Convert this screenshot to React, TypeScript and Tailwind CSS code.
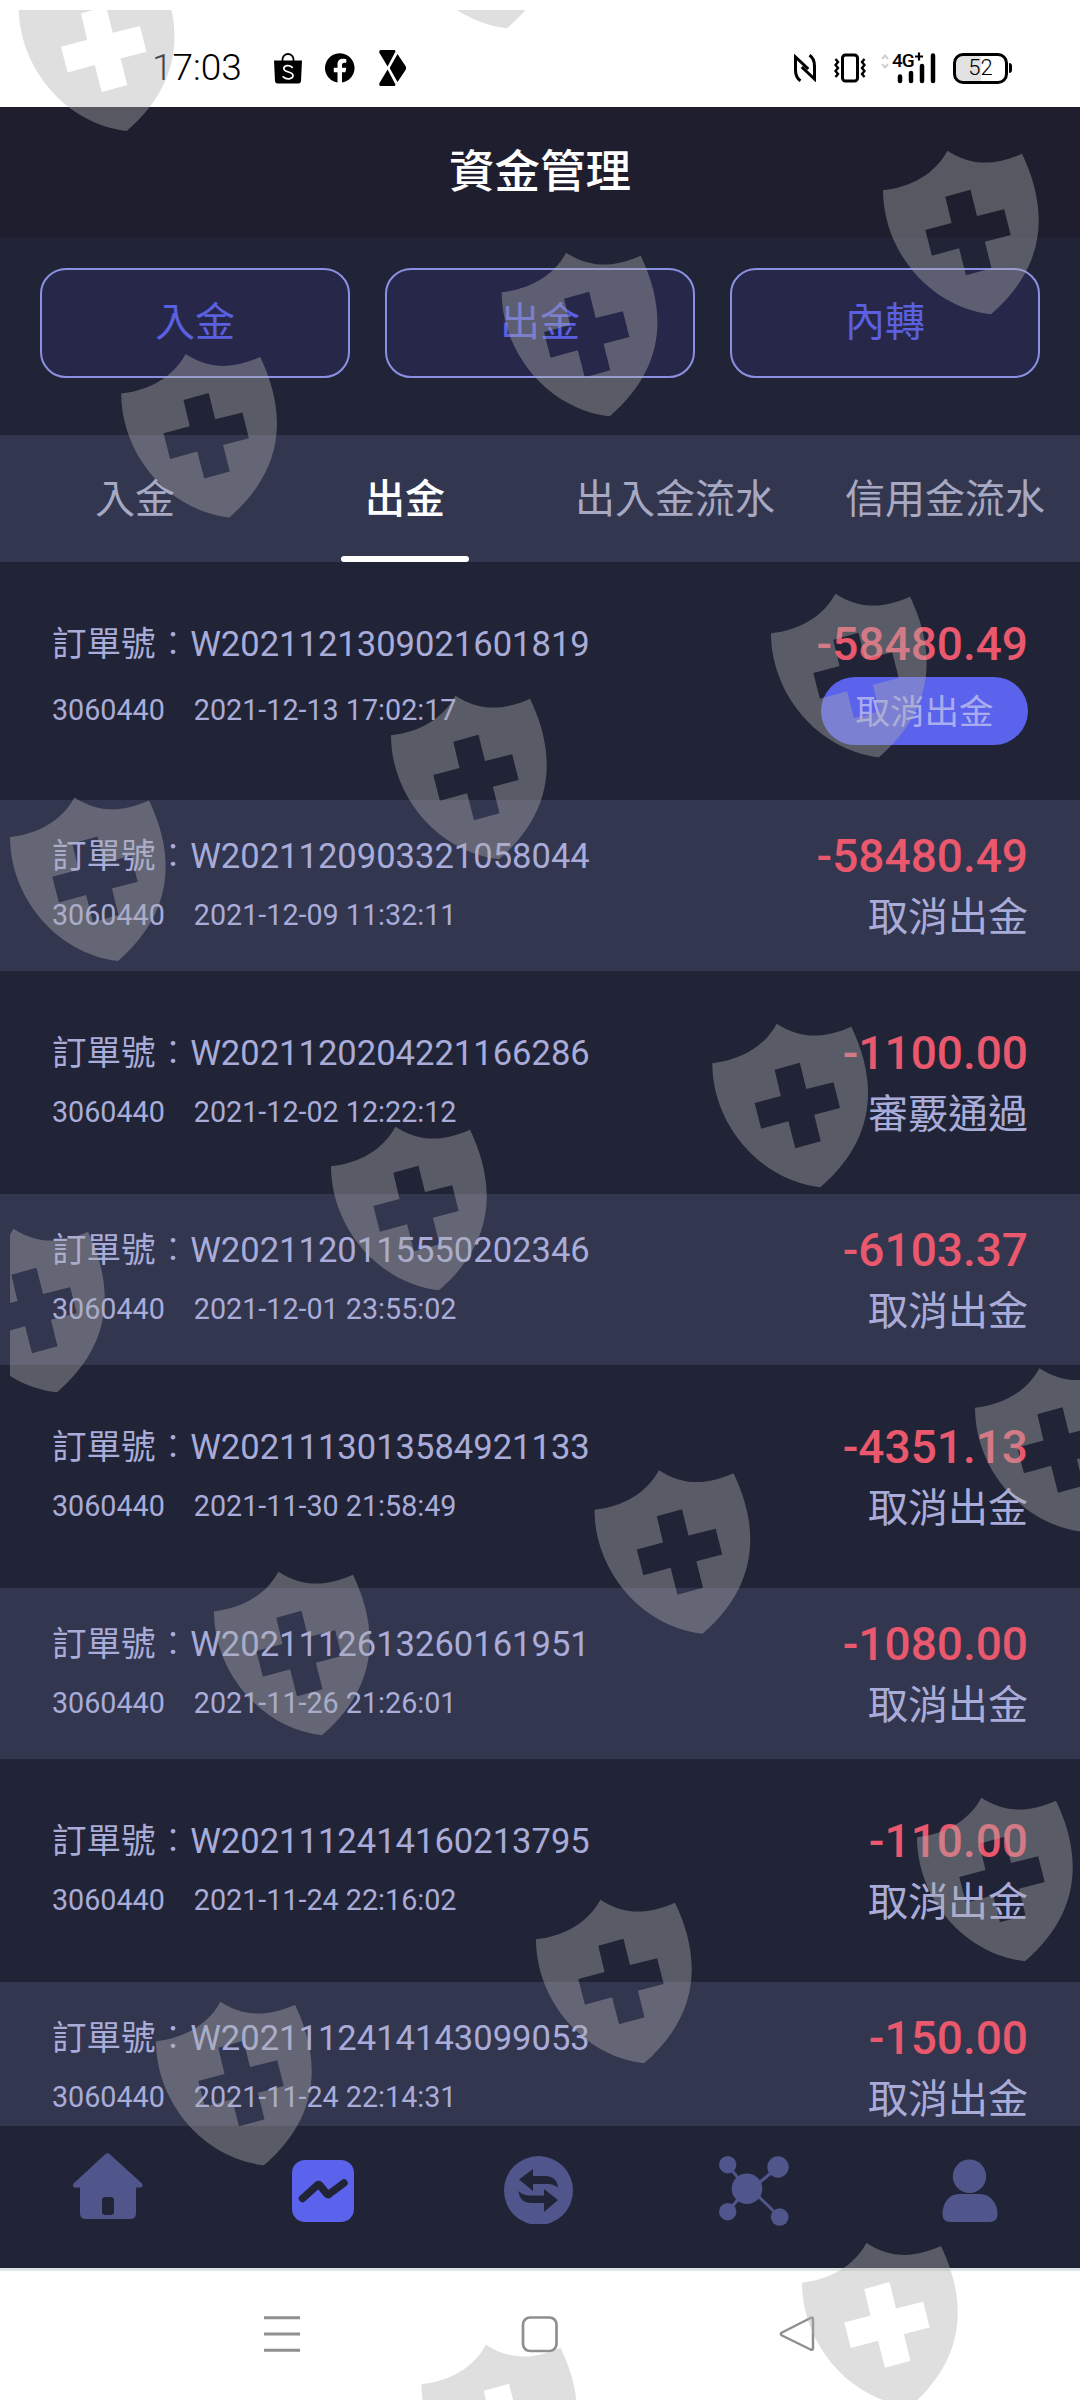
import clsx from 'clsx';

interface Order {
  orderNo: string;
  account: string;
  time: string;
  amount: string;
  status: string;
  cancellable?: boolean;
}

const actions = ['入金', '出金', '內轉'];
const tabs = ['入金', '出金', '出入金流水', '信用金流水'];
const activeTab = '出金';

const orders: Order[] = [
  { orderNo: 'W2021121309021601819', account: '3060440', time: '2021-12-13 17:02:17', amount: '-58480.49', status: '取消出金', cancellable: true },
  { orderNo: 'W2021120903321058044', account: '3060440', time: '2021-12-09 11:32:11', amount: '-58480.49', status: '取消出金' },
  { orderNo: 'W2021120204221166286', account: '3060440', time: '2021-12-02 12:22:12', amount: '-1100.00', status: '審覈通過' },
  { orderNo: 'W2021120115550202346', account: '3060440', time: '2021-12-01 23:55:02', amount: '-6103.37', status: '取消出金' },
  { orderNo: 'W2021113013584921133', account: '3060440', time: '2021-11-30 21:58:49', amount: '-4351.13', status: '取消出金' },
  { orderNo: 'W2021112613260161951', account: '3060440', time: '2021-11-26 21:26:01', amount: '-1080.00', status: '取消出金' },
  { orderNo: 'W2021112414160213795', account: '3060440', time: '2021-11-24 22:16:02', amount: '-110.00', status: '取消出金' },
  { orderNo: 'W2021112414143099053', account: '3060440', time: '2021-11-24 22:14:31', amount: '-150.00', status: '取消出金' },
];

// top-left corner of every shield in the watermark layer
const shields = [
  [18.7, -33.3],
  [399, -136],
  [883, 150],
  [501.7, 252],
  [121.2, 353.3],
  [771, 593],
  [391, 695],
  [10, 796.7],
  [712.3, 1023],
  [331, 1126],
  [-51, 1228],
  [975, 1367.5],
  [594.5, 1469.5],
  [214, 1571],
  [917, 1797],
  [536, 1899],
  [156, 2001],
  [802, 2242.4],
  [421.5, 2344],
];

const StatusBar = () => (
  <div className="h-[107px] shrink-0 bg-white text-black flex items-start justify-between pl-[152px] pr-[68px] pt-[50px]">
    <div className="flex h-9 items-center">
      <span className="w-[122px] text-[37px] leading-9 font-light font-['Roboto',sans-serif]">17:03</span>
      {/* shopping bag */}
      <svg width="28" height="32" viewBox="0 0 28 32" className="shrink-0">
        <path d="M8.5 10V7.500a5.500 5.500 0 0 1 11 0V10" fill="none" stroke="#000" strokeWidth="1.8" />
        <path d="M0 8.500h28l-1 20.500q-.2 2.500-2.700 2.500H3.700Q1.200 31.500 1 29z" />
        <path d="M18.200 15.300c-2.600-2.600-8.400-2.200-8.400 1.300 0 4.300 9.200 2.600 9.200 7 0 3.800-6.600 4.300-9.800 1.300" fill="none" stroke="#fff" strokeWidth="1.700" strokeLinecap="round" />
      </svg>
      <svg width="30" height="30" viewBox="0 0 30 30" className="ml-[23px] shrink-0">
        <path d="M12.500 29.600V19.200H8.800v-4.400h3.700v-3.300c0-3.800 2.100-5.800 5.600-5.800 1.600 0 3.200.3 3.200.3v3.700h-1.900c-1.800 0-2.400 1.100-2.400 2.300v2.800h4.200l-.7 4.400H17v10.400A14.800 14.800 0 1 0 12.500 29.600z" />
      </svg>
      <svg width="27" height="36" viewBox="0 0 27 36" className="ml-6 shrink-0">
        <path d="M2 0h13q2 0 1.200 2L8.600 16.500.5 3Q-.5 0 2 0zM8.600 19.500 16.200 34q.8 2-1.200 2H2q-2.500 0-1.500-3zM18.500 4l8 12q1.200 2 0 4l-8 12-7.300-13q-.7-1 0-2z" />
      </svg>
    </div>
    <div className="flex h-9 items-center">
      <svg width="22" height="28" viewBox="0 0 22 28" className="mr-px shrink-0" fill="none" stroke="#000" strokeWidth="3">
        <path d="M6.500 26.800Q1.500 23.500 1.500 16V3l12.800 12M15.500 1.200q5 3.300 5 10.800v13L7.700 13" />
      </svg>
      <svg width="32" height="30" viewBox="0 0 32 30" className="mr-px ml-[17px] shrink-0" fill="none" stroke="#000">
        <rect x="8.500" y="2" width="15" height="26" rx="3" strokeWidth="3" />
        <path d="m1.500 6 2.500 3-2.500 3 2.500 3-2.500 3 2.500 3-2.500 3M30.500 6 28 9l2.500 3-2.500 3 2.500 3-2.500 3 2.500 3" strokeWidth="2.400" />
      </svg>
      <div className="relative ml-[14px] w-[56px] h-8 shrink-0">
        <svg width="56" height="32" viewBox="0 0 56 32">
          <path d="m1 7 3-3.500L7 7M1 12l3 3.500L7 12" fill="none" stroke="#cfcfcf" strokeWidth="2" />
          <path d="M19 24.500v4.500M30 21v8M41 14v15M52 3.500V29" stroke="#000" strokeWidth="4.500" strokeLinecap="round" />
          <path d="M38 .5v8M34 4.500h8" stroke="#000" strokeWidth="2.200" />
        </svg>
        <span className="absolute left-[11px] top-[-1px] text-[19px] leading-5 font-medium tracking-[-1px] font-['Roboto',sans-serif]">4G</span>
      </div>
      <div className="ml-4 flex items-center shrink-0">
        <div className="flex h-[31px] w-[55px] items-center justify-center rounded-[10px] border-3 border-black bg-linear-to-r from-[#e2e2e2] from-50% to-white to-50%">
          <span className="text-[22px] leading-6 font-light font-['Roboto',sans-serif]">52</span>
        </div>
        <div className="ml-px h-2.5 w-[3px] rounded-r bg-black" />
      </div>
    </div>
  </div>
);

const OrderRow = ({ order, striped }: { order: Order; striped: boolean }) => (
  <div
    className={clsx(
      'flex shrink-0 justify-between px-[52px] text-[#a9acd9]',
      striped ? 'h-[171px] bg-[#33364f] pt-[25px]' : order.cancellable ? 'h-[238px] pt-[51px]' : 'h-[223px] pt-[51px]',
    )}
  >
    <div className={clsx('flex flex-col', order.cancellable && 'gap-[7px]')}>
      <p className="text-[34.560px] leading-[62px]">
        訂單號<span className="font-light">：</span>
        {order.orderNo}
      </p>
      <p className="flex gap-[29px] text-[28.700px] leading-[56px]">
        <span>{order.account}</span>
        <span>{order.time}</span>
      </p>
    </div>
    <div className="flex flex-col items-end">
      <p className="text-[46px] leading-[62px] font-medium text-[#e9586c]">{order.amount}</p>
      {order.cancellable ? (
        <button className="mt-[2px] h-[68px] w-[207px] rounded-full bg-[#5b62ec] text-[34.560px] leading-[70px] text-[#a9acee]">{order.status}</button>
      ) : (
        <p className="text-[40px] leading-[62px]">{order.status}</p>
      )}
    </div>
  </div>
);

const BottomNav = () => (
  <div className="grid h-[142px] shrink-0 grid-cols-5 items-start justify-items-center bg-[#212436] pt-[26px] pr-0.5 text-[#50568c]">
    <svg width="72" height="72" viewBox="0 0 72 72" fill="currentColor">
      <path d="M33.500 2q2-1.500 4 0L70 31.500q1.500 3-1 4h-5V61q0 6-6 6H14q-6 0-6-6V35.500H2.500q-2.500-1-1-4z" />
      <rect x="30" y="45" width="12" height="18" rx="3" fill="#212436" />
    </svg>
    <svg width="72" height="72" viewBox="0 0 72 72">
      <rect x="5" y="8" width="62" height="62" rx="13" fill="#5b62ec" />
      <path d="M15.500 46.500 30.500 33q1-.8 2 0l7.500 9q1 1 2.200 0L57 31" fill="none" stroke="#212436" strokeWidth="7.500" strokeLinecap="round" strokeLinejoin="round" />
    </svg>
    <svg width="72" height="72" viewBox="0 0 72 72" fill="currentColor">
      <circle cx="35.500" cy="38.500" r="34.500" />
      <g fill="#212436">
        <path d="M16 27.500 30 17v7h12q12 0 13 12-4-4-10-4H30v7z" />
        <path d="M55 48 41 37v6.500H28q-8 0-12.500-4.500 1 12 13 12H41V60z" />
      </g>
    </svg>
    <svg width="72" height="74" viewBox="0 0 72 74" fill="currentColor">
      <path d="M8.500 13 28 36.700 8.500 60M59 15 28 41M28 33l32.500 32" fill="none" stroke="currentColor" strokeWidth="3" />
      <circle cx="28" cy="36.700" r="15.300" />
      <circle cx="8.700" cy="12.700" r="8.700" />
      <circle cx="59" cy="15" r="10.700" />
      <circle cx="8.700" cy="59.700" r="8.700" />
      <circle cx="60.700" cy="65" r="8.800" />
    </svg>
    <svg width="72" height="72" viewBox="0 0 72 72" fill="currentColor">
      <circle cx="35.500" cy="24.300" r="16.700" />
      <path d="M25 42h21c10 0 17.500 9 17.500 20q0 8-8 8H16.500q-8 0-8-8C8.500 51 15 42 25 42z" />
    </svg>
  </div>
);

const SystemNav = () => (
  <div className="flex grow items-start bg-white border-t-3 border-[#dde5e4] pt-[44px] pl-[263px] gap-[220px] text-[#8f8f8f]">
    <svg width="38" height="38" viewBox="0 0 38 38" className="shrink-0" fill="none" stroke="currentColor" strokeWidth="3">
      <path d="M1 2.700h36M1 19h36M1 35.300h36" />
    </svg>
    <svg width="38" height="38" viewBox="0 0 38 38" className="shrink-0" fill="none" stroke="currentColor" strokeWidth="2.700">
      <rect x="2" y="2.500" width="33.500" height="33.500" rx="7" />
    </svg>
    <svg width="38" height="38" viewBox="0 0 38 38" className="shrink-0" fill="none" stroke="currentColor" strokeWidth="2.500" strokeLinejoin="round">
      <path d="M31.500 3Q34 2 34 4.500V33q0 2.500-2.500 1.500L3 20.500Q.5 19 3 17.500z" />
    </svg>
  </div>
);

const Watermark = () => (
  <div className="pointer-events-none absolute left-[10px] top-[10px] h-[2390px] w-[1070px] overflow-hidden">
    <svg width="1070" height="2390" viewBox="10 10 1070 2390" fill="#b0b0b0" fillOpacity="0.4">
      {shields.map(([x, y]) => (
        <path
          key={`${x}-${y}`}
          transform={`translate(${x} ${y})`}
          fillRule="evenodd"
          d="M0 40.300C28 37 52 24 64.400.7 88 16 112 16 139 3.700 165 58 165 115 108 164.300 46 157 0 100 0 40.300zM62.300 46.700 68.500 73 42.300 80 48.900 105.700 76.100 98.300 83 125.300 108.500 118.300 101.900 91.700 127.700 85 121.200 59.300 94 66 87.500 39.700z"
        />
      ))}
    </svg>
  </div>
);

const App = () => {
  return (
    <div className="relative flex h-[2400px] w-[1080px] flex-col overflow-hidden bg-[#212436] font-['Roboto','Noto_Sans_CJK_TC',sans-serif]">
      <StatusBar />

      <header className="flex h-[131px] shrink-0 items-center justify-center bg-[#1e1e2f]">
        <h1 className="text-[45.500px] leading-none font-medium text-white">資金管理</h1>
      </header>

      <div className="grid h-[196.500px] shrink-0 grid-cols-3 gap-[35px] px-10 pt-[30px]">
        {actions.map((label) => (
          <button key={label} className="h-[110px] rounded-[26px] border-2 border-[#8c90e0] bg-[#272849] text-[40px] leading-none text-[#5b60e0]">
            {label}
          </button>
        ))}
      </div>

      <div className="grid h-[127.500px] shrink-0 grid-cols-4 bg-[#33364f]">
        {tabs.map((label) => (
          <div key={label} className="flex flex-col items-center">
            <span
              className={clsx(
                'h-[121.500px] text-[40px] leading-[129px] whitespace-nowrap',
                label === activeTab ? 'font-medium text-white' : 'text-[#a7a9c3]',
              )}
            >
              {label}
            </span>
            {label === activeTab && <div className="h-1.5 w-32 rounded-full bg-white" />}
          </div>
        ))}
      </div>

      <main className="flex h-[1564px] shrink-0 flex-col overflow-hidden">
        {orders.map((order, i) => (
          <OrderRow key={order.orderNo} order={order} striped={i % 2 === 1} />
        ))}
      </main>

      <BottomNav />
      <SystemNav />
      <Watermark />
    </div>
  );
};

export default App;
